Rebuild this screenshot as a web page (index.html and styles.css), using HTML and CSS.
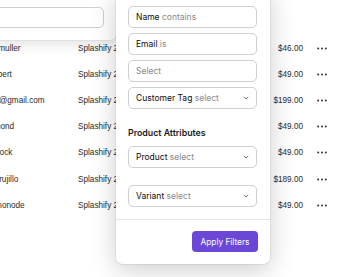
FILE: index.html
```html
<!DOCTYPE html>
<html>
<head>
<meta charset="utf-8">
<link rel="stylesheet" href="styles.css">
</head>
<body>
<div class="page">
  <div class="table">
    <div class="row"><span class="name">Johanna Baumuller</span><span class="prod">Splashify 2.0 Pro</span><span class="price">$46.00</span><span class="more"><svg width="10" height="3" viewBox="0 0 10 3"><circle cx="1.2" cy="1.5" r="1"/><circle cx="5" cy="1.5" r="1"/><circle cx="8.8" cy="1.5" r="1"/></svg></span></div>
    <div class="row"><span class="name">Thomas Lambert</span><span class="prod">Splashify 2.0 Pro</span><span class="price">$49.00</span><span class="more"><svg width="10" height="3" viewBox="0 0 10 3"><circle cx="1.2" cy="1.5" r="1"/><circle cx="5" cy="1.5" r="1"/><circle cx="8.8" cy="1.5" r="1"/></svg></span></div>
    <div class="row"><span class="name">tony.demarco@gmail.com</span><span class="prod">Splashify 2.0 Pro</span><span class="price">$199.00</span><span class="more"><svg width="10" height="3" viewBox="0 0 10 3"><circle cx="1.2" cy="1.5" r="1"/><circle cx="5" cy="1.5" r="1"/><circle cx="8.8" cy="1.5" r="1"/></svg></span></div>
    <div class="row"><span class="name">Marcus Desmond</span><span class="prod">Splashify 2.0 Pro</span><span class="price">$49.00</span><span class="more"><svg width="10" height="3" viewBox="0 0 10 3"><circle cx="1.2" cy="1.5" r="1"/><circle cx="5" cy="1.5" r="1"/><circle cx="8.8" cy="1.5" r="1"/></svg></span></div>
    <div class="row"><span class="name">Michael Hancock</span><span class="prod">Splashify 2.0 Pro</span><span class="price">$49.00</span><span class="more"><svg width="10" height="3" viewBox="0 0 10 3"><circle cx="1.2" cy="1.5" r="1"/><circle cx="5" cy="1.5" r="1"/><circle cx="8.8" cy="1.5" r="1"/></svg></span></div>
    <div class="row"><span class="name">Christopher Trujillo</span><span class="prod">Splashify 2.0 Pro</span><span class="price">$189.00</span><span class="more"><svg width="10" height="3" viewBox="0 0 10 3"><circle cx="1.2" cy="1.5" r="1"/><circle cx="5" cy="1.5" r="1"/><circle cx="8.8" cy="1.5" r="1"/></svg></span></div>
    <div class="row"><span class="name">Nathan Desimonode</span><span class="prod">Splashify 2.0 Pro</span><span class="price">$49.00</span><span class="more"><svg width="10" height="3" viewBox="0 0 10 3"><circle cx="1.2" cy="1.5" r="1"/><circle cx="5" cy="1.5" r="1"/><circle cx="8.8" cy="1.5" r="1"/></svg></span></div>
  </div>

  <div class="search-pop">
    <div class="field"></div>
  </div>

  <div class="filter-panel">
    <div class="fields">
      <div class="field"><span><span class="key">Name</span> <span class="muted">contains</span></span></div>
      <div class="field"><span><span class="key">Email</span> <span class="muted">is</span></span></div>
      <div class="field"><span class="muted">Select</span></div>
      <div class="field select"><span><span class="key">Customer Tag</span> <span class="muted">select</span></span><svg class="chev" width="6" height="4" viewBox="0 0 6 4"><path d="M0.8 0.9 L3 3 L5.2 0.9"/></svg></div>
    </div>
    <div class="section-title">Product Attributes</div>
    <div class="field select"><span><span class="key">Product</span> <span class="muted">select</span></span><svg class="chev" width="6" height="4" viewBox="0 0 6 4"><path d="M0.8 0.9 L3 3 L5.2 0.9"/></svg></div>
    <div class="field select variant"><span><span class="key">Variant</span> <span class="muted">select</span></span><svg class="chev" width="6" height="4" viewBox="0 0 6 4"><path d="M0.8 0.9 L3 3 L5.2 0.9"/></svg></div>
    <div class="footer">
      <button class="apply">Apply Filters</button>
    </div>
  </div>
</div>
</body>
</html>
```
FILE: styles.css
```css
* { box-sizing: border-box; }
html, body { margin: 0; padding: 0; background: #fff; }
body { width: 353px; height: 277px; overflow: hidden; }
.page { position: relative; width: 353px; height: 277px; overflow: hidden; background: #fff; }

.table {
  margin-left: -50px;
  padding-top: 35px;
  font-family: "Liberation Sans", Arial, sans-serif;
  font-size: 8.2px;
  color: #2a2a2a;
}
.row {
  display: grid;
  grid-template-columns: 128px 160px 65px 14px 20px;
  align-items: center;
  height: 26.2px;
}
.name, .prod { white-space: nowrap; overflow: hidden; }
.price { text-align: right; }
.more { grid-column: 5; display: flex; align-items: center; }
.more svg { fill: #333; }

.search-pop {
  position: absolute;
  left: -10px;
  top: -12px;
  width: 126px;
  height: 52px;
  background: #fff;
  border-radius: 6px;
  box-shadow: 0 4px 14px rgba(0,0,0,0.12), 0 0 0 1px rgba(0,0,0,0.04);
  padding: 19px 12px 0 0;
}
.search-pop .field { height: 21px; }

.filter-panel {
  position: absolute;
  left: 116px;
  top: -12px;
  width: 154px;
  height: 276px;
  background: #fff;
  border-radius: 7px;
  box-shadow: 0 6px 26px rgba(0,0,0,0.2), 0 0 0 1px rgba(0,0,0,0.05);
  padding: 18px 13px 0 12px;
  font-family: Inter, "Noto Sans", sans-serif;
  font-size: 8.5px;
  color: #1a1a1a;
}
.fields { display: flex; flex-direction: column; gap: 5px; }
.field {
  height: 22px;
  border: 1px solid #cfcfcf;
  border-radius: 5px;
  display: flex;
  align-items: center;
  padding: 0 7px;
  background: #fff;
  white-space: nowrap;
}
.key { font-weight: 400; color: #0d0d0d; }
.muted { color: #8a8a8a; }
.select { justify-content: space-between; }
.chev { fill: none; stroke: #666; stroke-width: 0.9; }

.section-title {
  font-weight: 600;
  font-size: 8.8px;
  margin: 18px 0 7px 0;
  height: 12px;
  line-height: 12px;
}
.variant { margin-top: 17px; }

.footer {
  margin: 12px -13px 0 -12px;
  border-top: 1px solid #e6e6e6;
  padding: 11px 12px 0 0;
  display: flex;
  justify-content: flex-end;
}
.apply {
  height: 21px;
  width: 66px;
  border: none;
  border-radius: 4px;
  background: #6b47d6;
  color: #fff;
  font-family: Inter, "Noto Sans", sans-serif;
  font-size: 8.3px;
  font-weight: 400;
  padding: 0;
}
```
